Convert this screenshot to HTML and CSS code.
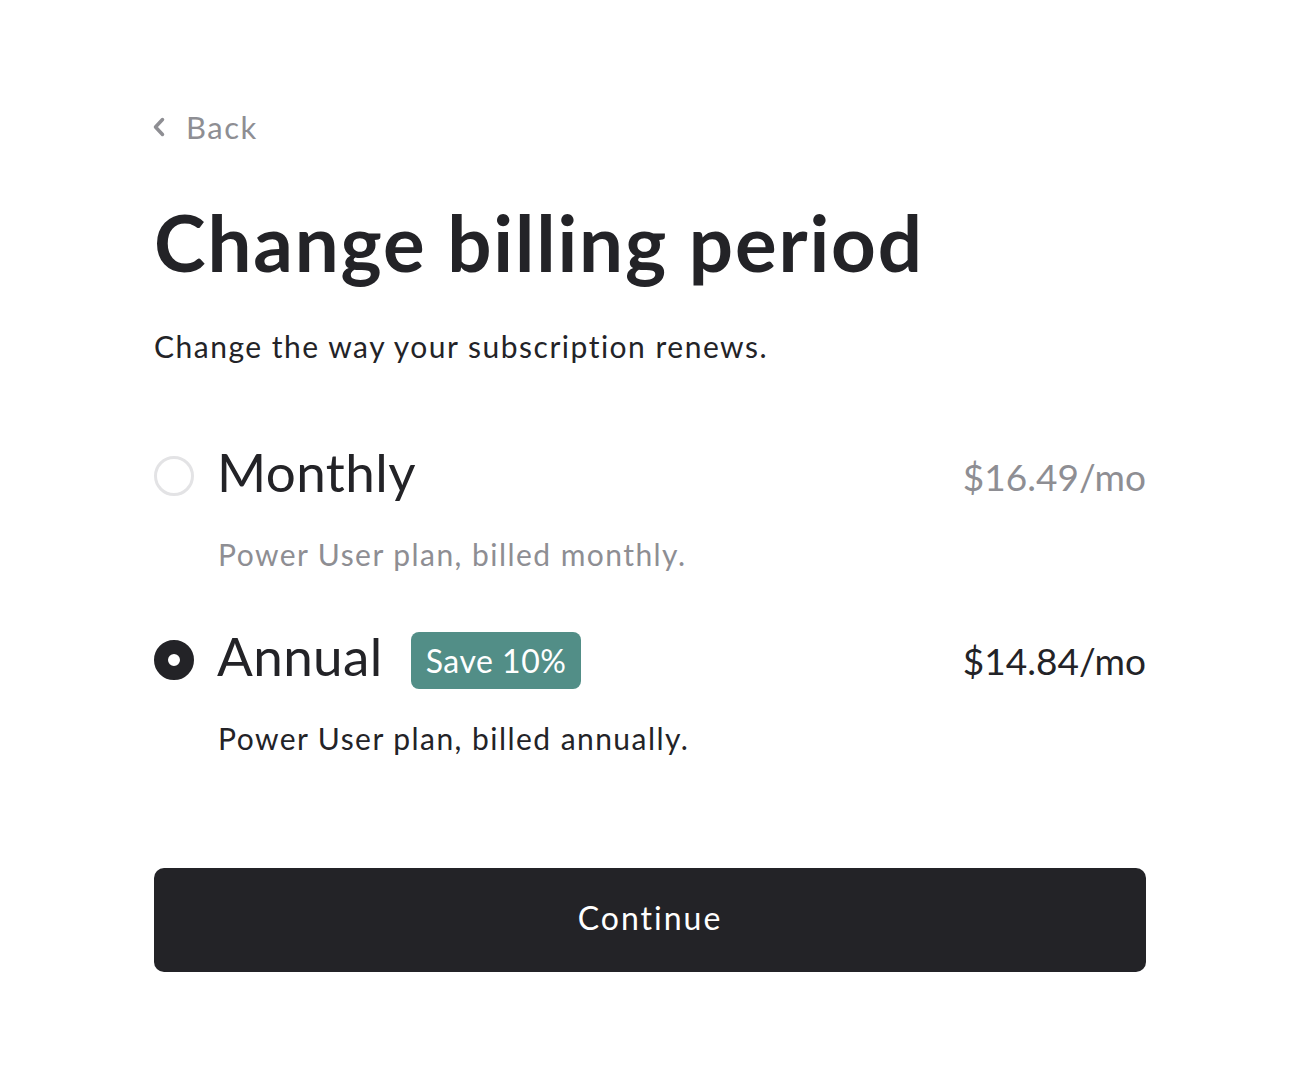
FILE: index.html
```html
<!DOCTYPE html>
<html lang="en">
<head>
<meta charset="utf-8">
<title>Change billing period</title>
<link rel="stylesheet" href="styles.css">
</head>
<body>
<main class="page">
  <a class="back" href="#">
    <svg class="back-icon" width="14" height="22" viewBox="0 0 14 22" aria-hidden="true">
      <path d="M10.5 3.5 L3.5 11 L10.5 18.5" fill="none" stroke="#8e8e93" stroke-width="3.5" stroke-linecap="round" stroke-linejoin="round"/>
    </svg>
    <span>Back</span>
  </a>
  <h1 class="title">Change billing period</h1>
  <p class="subtitle">Change the way your subscription renews.</p>

  <div class="options">
    <div class="option">
      <div class="option-head">
        <span class="radio"></span>
        <span class="option-name">Monthly</span>
        <span class="price muted">$16.49/mo</span>
      </div>
      <p class="option-desc muted">Power User plan, billed monthly.</p>
    </div>
    <div class="option">
      <div class="option-head">
        <span class="radio checked"></span>
        <span class="option-name">Annual</span>
        <span class="badge">Save 10%</span>
        <span class="price">$14.84/mo</span>
      </div>
      <p class="option-desc">Power User plan, billed annually.</p>
    </div>
  </div>

  <button class="continue" type="button">Continue</button>
</main>
</body>
</html>
```

FILE: styles.css
```css
html, body {
  margin: 0;
  padding: 0;
  background: #ffffff;
}
body {
  font-family: "Lato", "Noto Sans", sans-serif;
  color: #232327;
}
.page {
  width: 992px;
  margin: 0 0 0 154px;
  padding-top: 107px;
  display: flex;
  flex-direction: column;
}
.back {
  display: flex;
  align-items: center;
  gap: 20px;
  height: 40px;
  margin-left: -2px;
  color: #8e8e93;
  text-decoration: none;
  font-size: 31px;
  line-height: 40px;
  letter-spacing: 1.5px;
  width: max-content;
}
.back-icon {
  display: block;
}
.title {
  margin: 50px 0 0;
  font-size: 78px;
  line-height: 90px;
  font-weight: 700;
  letter-spacing: 1.85px;
  color: #232327;
}
.subtitle {
  margin: 39px 0 0;
  font-size: 30px;
  line-height: 40px;
  letter-spacing: 1.5px;
  color: #232327;
}
.options {
  margin-top: 74px;
  display: flex;
  flex-direction: column;
  gap: 50px;
}
.option-head {
  display: flex;
  align-items: center;
  height: 64px;
}
.radio {
  width: 40px;
  height: 40px;
  box-sizing: border-box;
  border-radius: 50%;
  border: 3px solid #e3e3e5;
  margin-right: 23px;
  margin-top: 8px;
  flex: none;
}
.radio.checked {
  border: 14px solid #232327;
  background: #ffffff;
}
.option-name {
  font-size: 53px;
  line-height: 64px;
  letter-spacing: 0.4px;
  color: #232327;
}
.badge {
  margin-left: 28px;
  margin-top: 9px;
  background: #528e87;
  color: #ffffff;
  border-radius: 8px;
  font-size: 32px;
  line-height: 57px;
  height: 57px;
  letter-spacing: 0.5px;
  padding: 0 15px;
}
.price {
  margin-left: auto;
  margin-top: 10px;
  font-size: 37px;
  line-height: 50px;
  letter-spacing: 0;
  color: #232327;
}
.price.muted,
.muted {
  color: #8e8e93;
}
.option-desc {
  margin: 30px 0 0 64px;
  font-size: 30px;
  line-height: 40px;
  letter-spacing: 1.45px;
}
.continue {
  margin-top: 110px;
  height: 104px;
  width: 100%;
  border: none;
  border-radius: 10px;
  background: #232327;
  color: #ffffff;
  font-family: "Lato", "Noto Sans", sans-serif;
  font-size: 32px;
  line-height: 40px;
  padding: 0 0 4px;
  letter-spacing: 2px;
  cursor: pointer;
}
```
